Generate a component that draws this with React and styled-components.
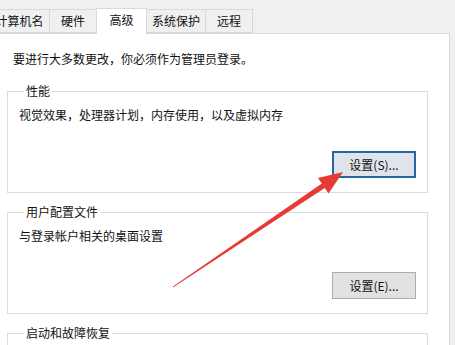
import React from 'react';
import styled, { createGlobalStyle } from 'styled-components';

const GlobalStyle = createGlobalStyle`
  html, body { margin: 0; padding: 0; background: #f0f0f0; }
  body { font-family: "Noto Sans CJK SC", "Microsoft YaHei", sans-serif; }
`;

const Window = styled.div`
  position: relative;
  width: 455px;
  height: 345px;
  overflow: hidden;
  background: #f0f0f0;
  color: #111;
  font-size: 12px;
  line-height: 16px;
`;

const TabStrip = styled.div`
  display: flex;
  align-items: flex-end;
  height: 34px;
  margin-left: -10px;
  position: relative;
  z-index: 1;
`;

const Tab = styled.div`
  box-sizing: border-box;
  display: flex;
  align-items: center;
  justify-content: center;
  width: ${p => p.$w}px;
  height: ${p => (p.$active ? 26 : 24)}px;
  margin-left: -1px;
  margin-bottom: ${p => (p.$active ? 0 : 1)}px;
  padding-bottom: ${p => (p.$active ? 3 : 0)}px;
  border: 1px solid #d9d9d9;
  border-bottom: ${p => (p.$active ? 'none' : '1px solid #d9d9d9')};
  background: ${p => (p.$active ? '#fff' : '#f0f0f0')};
  white-space: nowrap;
  z-index: ${p => (p.$active ? 2 : 1)};
`;

const Panel = styled.div`
  box-sizing: border-box;
  width: 451px;
  height: 320px;
  margin-top: -1px;
  margin-left: -1px;
  padding: 17px 21px 0 7px;
  background: #fff;
  border: 1px solid #d9d9d9;
`;

const Notice = styled.div`
  padding-left: 6px;
  margin-bottom: 16px;
`;

const Group = styled.fieldset`
  margin: 0 0 11px 0;
  padding: 0 12px ${p => p.$bottom}px 11px;
  border: 1px solid #dcdcdc;
  min-inline-size: 0;
  display: flex;
  flex-direction: column;
`;

const Legend = styled.legend`
  margin-left: 5px;
  padding: 0 2px;
  font-size: 12px;
  line-height: 16px;
`;

const Description = styled.div`
  margin-top: ${p => p.$top}px;
`;

const Button = styled.button`
  box-sizing: border-box;
  align-self: flex-end;
  width: 84px;
  height: 27px;
  margin-top: ${p => p.$top}px;
  margin-right: -1px;
  font-family: inherit;
  font-size: 12px;
  color: #111;
  background: ${p => (p.$focused ? '#dfe4ea' : '#e1e1e1')};
  border: ${p => (p.$focused ? '2px solid #2766a4' : '1px solid #adadad')};
  padding: 0;
`;

const Arrow = styled.svg`
  position: absolute;
  left: 0;
  top: 0;
  pointer-events: none;
  z-index: 5;
`;

const tabs = [
  { label: '计算机名', w: 61 },
  { label: '硬件', w: 48 },
  { label: '高级', w: 51, active: true },
  { label: '系统保护', w: 60 },
  { label: '远程', w: 48 },
];

export default function App() {
  return (
    <>
      <GlobalStyle />
      <Window>
        <TabStrip>
          {tabs.map(t => (
            <Tab key={t.label} $w={t.w} $active={t.active}>{t.label}</Tab>
          ))}
        </TabStrip>
        <Panel>
          <Notice>要进行大多数更改，你必须作为管理员登录。</Notice>
          <Group $bottom={14}>
            <Legend>性能</Legend>
            <Description $top={8}>视觉效果，处理器计划，内存使用，以及虚拟内存</Description>
            <Button $top={28} $focused>设置(S)...</Button>
          </Group>
          <Group $bottom={14}>
            <Legend>用户配置文件</Legend>
            <Description $top={8}>与登录帐户相关的桌面设置</Description>
            <Button $top={28}>设置(E)...</Button>
          </Group>
          <Group $bottom={40}>
            <Legend>启动和故障恢复</Legend>
          </Group>
        </Panel>
        <Arrow width="455" height="345" viewBox="0 0 455 345">
          <polygon
            points="172.6,286.7 321.8,183.6 318,178 343,172 328.5,193.5 324.8,188 173.4,287.3"
            fill="#e63b35"
          />
        </Arrow>
      </Window>
    </>
  );
}
